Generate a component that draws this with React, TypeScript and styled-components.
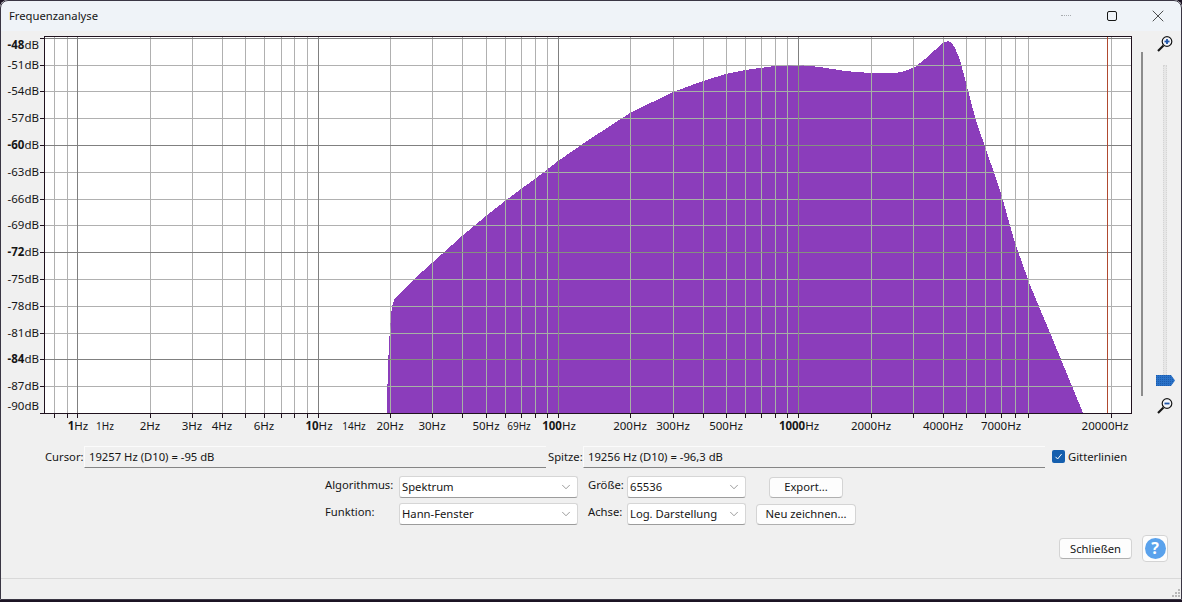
import React from "react";
import styled, { createGlobalStyle } from "styled-components";
import { ChevronDown, X } from "lucide-react";

const GlobalStyle = createGlobalStyle`
  html, body {
    margin: 0;
    padding: 0;
    background: #1c1424;
  }
  body {
    font-family: "Noto Sans", "Open Sans", "Liberation Sans", sans-serif;
    font-size: 11.25px;
    color: #161616;
  }
`;

const Window = styled.div`
  position: relative;
  width: 1182px;
  height: 600px;
  display: flex;
  flex-direction: column;
  background: #f0f0f0;
  border-radius: 8px 8px 0 0;
  overflow: hidden;
  outline: 1px solid #3a3644;
  outline-offset: -1px;
`;

const TitleBar = styled.div`
  height: 31px;
  flex: none;
  display: flex;
  align-items: center;
  padding: 0 1px 0 9px;
  background: #eff3f8;
`;

const Title = styled.div`
  flex: 1;
`;

const WindowButton = styled.div`
  width: 46px;
  height: 31px;
  display: flex;
  align-items: center;
  justify-content: center;
`;

const MinimizeMark = styled.span`
  width: 10px;
  border-top: 1px dotted #a8acb0;
`;

const MaximizeMark = styled.span`
  width: 8px;
  height: 8px;
  border: 1px solid #161616;
  border-radius: 2px;
`;

const Main = styled.div`
  height: 407px;
  flex: none;
  display: flex;
`;

const ChartSvg = styled.svg`
  width: 1140px;
  height: 407px;
  flex: none;
  display: block;
`;

const AxisText = styled.text<{ $small?: boolean }>`
  font-family: "Noto Sans", "Open Sans", "Liberation Sans", sans-serif;
  font-size: ${(p) => (p.$small ? "10px" : "11.5px")};
  fill: #161616;
`;

const Strong = styled.tspan`
  font-weight: 700;
`;

const Divider = styled.div`
  width: 2px;
  height: 344px;
  margin: 21px 0 0 1px;
  background: #8c8c8c;
`;

const ZoomColumn = styled.div`
  width: 20px;
  margin-left: 12px;
  padding-top: 3px;
  display: flex;
  flex-direction: column;
  align-items: center;
`;

const ZoomTrack = styled.div`
  position: relative;
  width: 4px;
  height: 320px;
  margin: 11px 0;
  background: #e6e6e6;
  border: 1px dotted #d4d4d4;
  border-bottom: none;
  box-sizing: border-box;
`;

const ZoomThumb = styled.svg`
  position: absolute;
  left: -8px;
  bottom: -1px;
  width: 19px;
  height: 11px;
`;

const ReadoutRow = styled.div`
  height: 22px;
  flex: none;
  margin-top: 8px;
  padding-left: 45px;
  display: flex;
  align-items: center;
`;

const ReadoutLabel = styled.div<{ $width: number; $inset?: number }>`
  width: ${(p) => p.$width}px;
  flex: none;
  box-sizing: border-box;
  padding-left: ${(p) => p.$inset ?? 0}px;
  margin-bottom: 2px;
`;

const ReadoutField = styled.div`
  width: 462px;
  height: 22px;
  flex: none;
  box-sizing: border-box;
  display: flex;
  align-items: center;
  padding: 0 0 1px 4px;
  border-top: 1px solid #fbfbfb;
  border-left: 1px solid #fbfbfb;
  border-bottom: 1px solid #858585;
`;

const CheckLabel = styled.div`
  margin: 0 0 2px 7px;
  display: flex;
  align-items: center;
  gap: 3px;
`;

const CheckBox = styled.span`
  width: 13px;
  height: 13px;
  border-radius: 2px;
  background: #155fae;
  display: flex;
  align-items: center;
  justify-content: center;
`;

const ControlsGrid = styled.div`
  flex: none;
  margin: 8px 0 0 325px;
  display: grid;
  grid-template-columns: 74px 179px 10px 39px 119px 10px 100px;
  grid-auto-rows: 22px;
  row-gap: 5px;
  align-items: center;
`;

const GridLabel = styled.span`
  margin-bottom: 5px;
`;

const SelectBox = styled.div`
  height: 22px;
  box-sizing: border-box;
  padding: 0 4px 1px 2px;
  display: flex;
  align-items: center;
  justify-content: space-between;
  background: #fff;
  border: 1px solid #d6d6d6;
  border-bottom-color: #9c9c9c;
  border-radius: 3px;
`;

const Gap = styled.span``;

const PushButton = styled.div<{ $width: number }>`
  width: ${(p) => p.$width}px;
  height: 21px;
  box-sizing: border-box;
  display: flex;
  align-items: center;
  justify-content: center;
  padding-bottom: 1px;
  background: #fdfdfd;
  border: 1px solid #d4d4d4;
  border-bottom-color: #b0b0b0;
  border-radius: 4px;
  justify-self: center;
`;

const Footer = styled.div`
  flex: none;
  margin-top: 10px;
  padding-right: 14px;
  display: flex;
  justify-content: flex-end;
  align-items: center;
  gap: 10px;
`;

const HelpButton = styled.div`
  width: 26px;
  height: 27px;
  box-sizing: border-box;
  display: flex;
  align-items: center;
  justify-content: center;
  background: #fdfdfd;
  border: 1px solid #d4d4d4;
  border-radius: 4px;
`;

const HelpDisc = styled.span`
  width: 21px;
  height: 21px;
  border-radius: 50%;
  background: #5aa2ec;
  color: #fff;
  font-weight: 700;
  font-size: 16px;
  line-height: 21px;
  text-align: center;
`;

const StatusBar = styled.div`
  margin-top: auto;
  height: 21px;
  flex: none;
  display: flex;
  justify-content: flex-end;
  align-items: flex-end;
  border-top: 1px solid #d9d9d9;
`;

const CHART_LEFT = 44;
const CHART_RIGHT = 1131;
const CHART_TOP = 37;
const CHART_BOTTOM = 413;

const verticals = [
  54, 67, 150, 192, 222, 245, 264, 281, 294, 307, 390, 432, 462, 486, 505, 521, 535, 547, 630, 673,
  703, 726, 745, 761, 775, 787, 871, 913, 943, 966, 985, 1001, 1015, 1028, 1111,
];
const majorVerticals = [77, 318, 558, 798];
const horizontals = [65, 91, 118, 172, 199, 225, 279, 306, 333, 386];
const majorHorizontals = [38, 145, 252, 359];

const dbLabels: [string, string, number][] = [
  ["-48", "b", 45],
  ["-51", "", 65],
  ["-54", "", 91],
  ["-57", "", 118],
  ["-60", "b", 145],
  ["-63", "", 172],
  ["-66", "", 199],
  ["-69", "", 225],
  ["-72", "b", 252],
  ["-75", "", 279],
  ["-78", "", 306],
  ["-81", "", 333],
  ["-84", "b", 359],
  ["-87", "", 386],
  ["-90", "", 406],
];

const hzLabels: { x: number; v: string; bold?: boolean; small?: boolean }[] = [
  { x: 78, v: "1", bold: true },
  { x: 105, v: "1", small: true },
  { x: 150, v: "2" },
  { x: 192, v: "3" },
  { x: 222, v: "4" },
  { x: 264, v: "6" },
  { x: 319, v: "10", bold: true },
  { x: 354, v: "14", small: true },
  { x: 390, v: "20" },
  { x: 432, v: "30" },
  { x: 486, v: "50" },
  { x: 519, v: "69", small: true },
  { x: 559, v: "100", bold: true },
  { x: 630, v: "200" },
  { x: 673, v: "300" },
  { x: 726, v: "500" },
  { x: 799, v: "1000", bold: true },
  { x: 871, v: "2000" },
  { x: 943, v: "4000" },
  { x: 1001, v: "7000" },
  { x: 1105, v: "20000" },
];

const spectrum = [
  [387, 413], [387, 401], [388, 368], [389, 343], [391, 316], [392, 307], [394, 300], [413, 280],
  [432, 263], [462, 236], [486, 216], [505, 201], [521, 189], [535, 179], [558, 161], [590, 139],
  [630, 113], [673, 92], [703, 81], [726, 74], [745, 70], [775, 66], [798, 65], [820, 67], [845, 71],
  [870, 73], [895, 73], [905, 71], [915, 67], [925, 59], [935, 50], [943, 43], [948, 41], [952, 43],
  [955, 48], [960, 60], [965, 79], [970, 98], [975, 117], [982, 138], [1000, 190], [1015, 243],
  [1030, 285], [1053, 340], [1083, 413],
]
  .map((p) => p.join(","))
  .join(" ");

function Grid({ tinted }: { tinted?: boolean }) {
  const light = tinted ? "#a6b2a4" : "#b0b0b0";
  const dark = tinted ? "#858f80" : "#808080";
  return (
    <g shapeRendering="crispEdges">
      {horizontals.map((y) => (
        <line key={y} x1={CHART_LEFT} x2={CHART_RIGHT} y1={y + 0.5} y2={y + 0.5} stroke={light} />
      ))}
      {verticals.map((x) => (
        <line key={x} x1={x + 0.5} x2={x + 0.5} y1={CHART_TOP} y2={CHART_BOTTOM} stroke={light} />
      ))}
      {majorHorizontals.map((y) => (
        <line key={y} x1={CHART_LEFT} x2={CHART_RIGHT} y1={y + 0.5} y2={y + 0.5} stroke={dark} />
      ))}
      {majorVerticals.map((x) => (
        <line key={x} x1={x + 0.5} x2={x + 0.5} y1={CHART_TOP} y2={CHART_BOTTOM} stroke={dark} />
      ))}
    </g>
  );
}

function Chart() {
  const ticksY = [...horizontals, ...majorHorizontals, 413];
  const ticksX = [...verticals, ...majorVerticals];
  return (
    <ChartSvg viewBox="0 31 1140 407">
      <defs>
        <clipPath id="spectrum-clip">
          <polygon points={spectrum} />
        </clipPath>
      </defs>
      <rect x={CHART_LEFT} y={CHART_TOP} width={CHART_RIGHT - CHART_LEFT} height={CHART_BOTTOM - CHART_TOP} fill="#fff" />
      <Grid />
      <polygon points={spectrum} fill="#8b3dbb" shapeRendering="crispEdges" />
      <g clipPath="url(#spectrum-clip)">
        <Grid tinted />
      </g>
      <line x1={1107.5} x2={1107.5} y1={CHART_TOP} y2={CHART_BOTTOM} stroke="#b04a30" shapeRendering="crispEdges" />
      <rect
        x={CHART_LEFT + 0.5}
        y={36.5}
        width={CHART_RIGHT - CHART_LEFT}
        height={377}
        fill="none"
        stroke="#20121e"
        shapeRendering="crispEdges"
      />
      <g stroke="#20121e" shapeRendering="crispEdges">
        {ticksY.map((y) => (
          <line key={y} x1={40} x2={44} y1={y + 0.5} y2={y + 0.5} />
        ))}
        {ticksX.map((x) => (
          <line key={x} x1={x + 0.5} x2={x + 0.5} y1={414} y2={418} />
        ))}
      </g>
      {dbLabels.map(([db, bold, y]) => (
        <AxisText key={db} x={39} y={y + 4} textAnchor="end">
          {bold ? <Strong>{db}</Strong> : db}dB
        </AxisText>
      ))}
      {hzLabels.map((l) => (
        <AxisText key={l.x} x={l.x} y={430} textAnchor="middle" $small={l.small}>
          {l.bold ? <Strong>{l.v}</Strong> : l.v}Hz
        </AxisText>
      ))}
    </ChartSvg>
  );
}

function Magnifier({ plus }: { plus?: boolean }) {
  return (
    <svg width="20" height="20" viewBox="0 0 20 20">
      <line x1="3" y1="17" x2="8.5" y2="11.5" stroke="#161616" strokeWidth="2.2" />
      <circle cx="12" cy="7.5" r="4.8" fill="#f4f6fa" stroke="#161616" strokeWidth="1.2" />
      <rect x="9.5" y="6.6" width="5" height="1.8" fill="#1f55a8" />
      {plus && <rect x="11.1" y="5" width="1.8" height="5" fill="#1f55a8" />}
    </svg>
  );
}

function SelectField({ value }: { value: string }) {
  return (
    <SelectBox>
      {value}
      <ChevronDown size={14} strokeWidth={1} color="#555" />
    </SelectBox>
  );
}

export default function App() {
  return (
    <>
      <GlobalStyle />
      <Window>
        <TitleBar>
          <Title>Frequenzanalyse</Title>
          <WindowButton>
            <MinimizeMark />
          </WindowButton>
          <WindowButton>
            <MaximizeMark />
          </WindowButton>
          <WindowButton>
            <X size={20} strokeWidth={0.9} color="#161616" />
          </WindowButton>
        </TitleBar>
        <Main>
          <Chart />
          <Divider />
          <ZoomColumn>
            <Magnifier plus />
            <ZoomTrack>
              <ZoomThumb viewBox="0 0 19 11">
                <defs>
                  <pattern id="thumb-dither" width="2" height="2" patternUnits="userSpaceOnUse">
                    <rect width="2" height="2" fill="#2a72c8" />
                    <rect width="1" height="1" fill="#1c5cae" />
                  </pattern>
                </defs>
                <polygon points="0,0 15,0 19,5.5 15,11 0,11" fill="url(#thumb-dither)" />
              </ZoomThumb>
            </ZoomTrack>
            <Magnifier />
          </ZoomColumn>
        </Main>
        <ReadoutRow>
          <ReadoutLabel $width={39}>Cursor:</ReadoutLabel>
          <ReadoutField>19257 Hz (D10) = -95 dB</ReadoutField>
          <ReadoutLabel $width={37} $inset={2}>
            Spitze:
          </ReadoutLabel>
          <ReadoutField>19256 Hz (D10) = -96,3 dB</ReadoutField>
          <CheckLabel>
            <CheckBox>
              <svg width="9" height="9" viewBox="0 0 9 9">
                <polyline points="1.5,4.8 3.6,7 7.6,2" fill="none" stroke="#fff" strokeWidth="1" />
              </svg>
            </CheckBox>
            Gitterlinien
          </CheckLabel>
        </ReadoutRow>
        <ControlsGrid>
          <GridLabel>Algorithmus:</GridLabel>
          <SelectField value="Spektrum" />
          <Gap />
          <GridLabel>Größe:</GridLabel>
          <SelectField value="65536" />
          <Gap />
          <PushButton $width={74}>Export...</PushButton>
          <GridLabel>Funktion:</GridLabel>
          <SelectField value="Hann-Fenster" />
          <Gap />
          <GridLabel>Achse:</GridLabel>
          <SelectField value="Log. Darstellung" />
          <Gap />
          <PushButton $width={100}>Neu zeichnen...</PushButton>
        </ControlsGrid>
        <Footer>
          <PushButton $width={73}>Schließen</PushButton>
          <HelpButton>
            <HelpDisc>?</HelpDisc>
          </HelpButton>
        </Footer>
        <StatusBar>
          <svg width="12" height="12" viewBox="0 0 12 12" fill="#b8b8b8">
            <rect x="8" y="1" width="2" height="2" />
            <rect x="5" y="4" width="2" height="2" />
            <rect x="8" y="4" width="2" height="2" />
            <rect x="2" y="7" width="2" height="2" />
            <rect x="5" y="7" width="2" height="2" />
            <rect x="8" y="7" width="2" height="2" />
          </svg>
        </StatusBar>
      </Window>
    </>
  );
}
